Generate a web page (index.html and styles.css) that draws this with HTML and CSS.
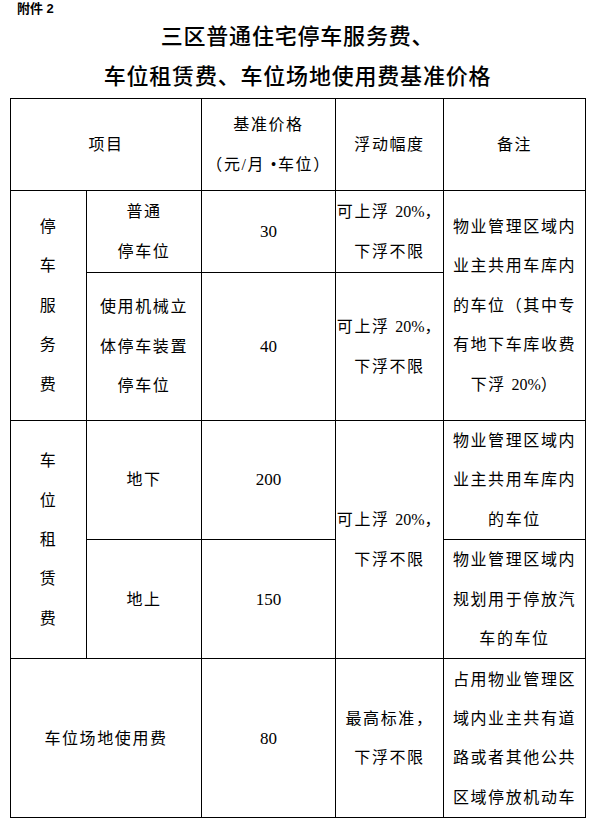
FILE: index.html
```html
<!DOCTYPE html>
<html lang="zh-CN">
<head>
<meta charset="utf-8">
<title>附件2</title>
<link rel="stylesheet" href="styles.css">
</head>
<body>
<div class="page">
  <div class="note">附件 2</div>
  <h1 class="title">三区普通住宅停车服务费、<br>车位租赁费、车位场地使用费基准价格</h1>
  <table class="fees">
    <colgroup>
      <col class="c1"><col class="c2"><col class="c3"><col class="c4"><col class="c5">
    </colgroup>
    <tr class="r-head">
      <td colspan="2">项目</td>
      <td>基准价格<br>（元/月 •车位）</td>
      <td>浮动幅度</td>
      <td>备注</td>
    </tr>
    <tr class="r1">
      <td rowspan="2">停<br>车<br>服<br>务<br>费</td>
      <td>普通<br>停车位</td>
      <td class="num">30</td>
      <td>可上浮 <span class="lat">20%</span>，<br>下浮不限</td>
      <td rowspan="2">物业管理区域内<br>业主共用车库内<br>的车位（其中专<br>有地下车库收费<br>下浮 <span class="lat">20%</span>）</td>
    </tr>
    <tr class="r2">
      <td>使用机械立<br>体停车装置<br>停车位</td>
      <td class="num">40</td>
      <td>可上浮 <span class="lat">20%</span>，<br>下浮不限</td>
    </tr>
    <tr class="r3">
      <td rowspan="2">车<br>位<br>租<br>赁<br>费</td>
      <td>地下</td>
      <td class="num">200</td>
      <td rowspan="2">可上浮 <span class="lat">20%</span>，<br>下浮不限</td>
      <td>物业管理区域内<br>业主共用车库内<br>的车位</td>
    </tr>
    <tr class="r4">
      <td>地上</td>
      <td class="num">150</td>
      <td>物业管理区域内<br>规划用于停放汽<br>车的车位</td>
    </tr>
    <tr class="r5">
      <td colspan="2">车位场地使用费</td>
      <td class="num">80</td>
      <td>最高标准，<br>下浮不限</td>
      <td>占用物业管理区<br>域内业主共有道<br>路或者其他公共<br>区域停放机动车</td>
    </tr>
  </table>
</div>
</body>
</html>
```
FILE: styles.css
```css
html, body {
  margin: 0;
  padding: 0;
  background: #ffffff;
}

body {
  color: #000000;
  font-family: "Liberation Serif", "Noto Sans CJK SC", serif;
}

.page {
  width: 596px;
  padding: 0 0 0 10px;
  box-sizing: border-box;
}

.note {
  padding-left: 7px;
  font-family: "Liberation Sans", "Noto Sans CJK SC", sans-serif;
  font-weight: bold;
  font-size: 13px;
  line-height: 17px;
  height: 17px;
}

.title {
  margin: 0;
  width: 575px;
  text-align: center;
  font-size: 22px;
  letter-spacing: 0.8px;
  font-weight: 500;
  line-height: 40px;
  height: 81px;
}

.fees {
  border-collapse: collapse;
  table-layout: fixed;
  width: 575px;
}

.fees td {
  border: 1px solid #000000;
  padding: 0;
  text-align: center;
  vertical-align: middle;
  font-size: 16px;
  letter-spacing: 1.6px;
  line-height: 39.4px;
}

.fees td.num {
  font-size: 17px;
  letter-spacing: 0;
}

.lat {
  letter-spacing: 0;
}

.c1 { width: 76px; }
.c2 { width: 115px; }
.c3 { width: 134px; }
.c4 { width: 108px; }
.c5 { width: 142px; }

.r-head { height: 92px; }
.r1 { height: 82px; }
.r2 { height: 148px; }
.r3 { height: 119px; }
.r4 { height: 119px; }
.r5 { height: 159px; }
```
